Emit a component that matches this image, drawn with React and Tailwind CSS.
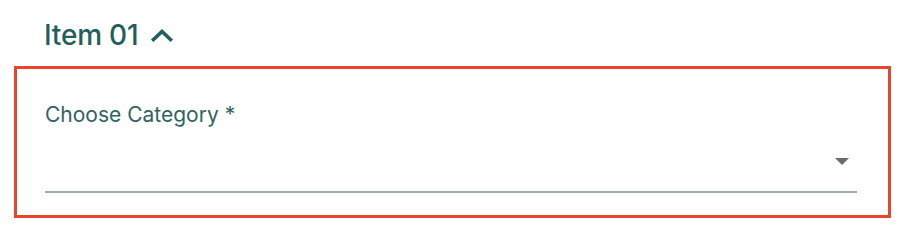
export default function App() {
  return (
    <div className="w-[912px] h-[232px] bg-white" style={{ fontFamily: 'Inter, "Open Sans", sans-serif' }}>
      <div className="pl-[44px] pt-[18px] h-[66px] flex items-start">
        <div className="flex items-center gap-[12px] text-[#235e5c]">
          <span className="text-[28px] font-medium leading-[34px] tracking-[-0.2px]">Item 01</span>
          <svg width="24" height="14" viewBox="0 0 24 14" fill="none" stroke="#235e5c" strokeWidth="3.6" strokeLinecap="square" className="mb-[1px]">
            <path d="M3.5 11.5 L12 3.5 L20.5 11.5" />
          </svg>
        </div>
      </div>
      <div className="ml-[14px] w-[877px] h-[152px] border-[3px] border-[#e8452c] pl-[28px] pr-[31px] pt-[32px]">
        <div className="text-[21px] leading-[28px] text-[#2f6463]">Choose Category *</div>
        <div className="h-[64px] flex items-center justify-end pr-[8px] border-b-2 border-[#9eabab]">
          <svg width="14" height="7" viewBox="0 0 14 7" className="mt-[3px]">
            <path d="M0 0 H14 L7 7 Z" fill="#6b6b6b" />
          </svg>
        </div>
      </div>
    </div>
  );
}
